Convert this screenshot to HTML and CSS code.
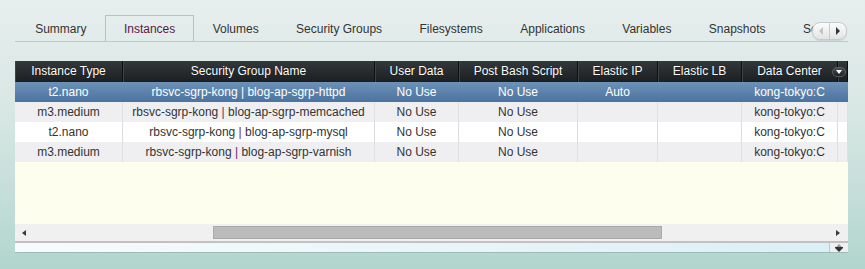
FILE: index.html
```html
<!DOCTYPE html>
<html lang="en">
<head>
  <meta charset="UTF-8" />
  <title>Instances</title>
  <link rel="stylesheet" href="styles.css">
</head>
<body>

  <div class="tabs">
    <div class="tab">Summary</div>
    <div class="tab active">Instances</div>
    <div class="tab">Volumes</div>
    <div class="tab">Security Groups</div>
    <div class="tab">Filesystems</div>
    <div class="tab">Applications</div>
    <div class="tab">Variables</div>
    <div class="tab">Snapshots</div>
    <div class="tab">Scripts</div>
    <div class="tab-scroll">
      <span class="arrow-left"></span>
      <span class="arrow-right"></span>
    </div>
  </div>

  <div class="panel">
    <div class="grid">
      <div class="row head">
        <div class="cell">Instance Type</div>
        <div class="cell">Security Group Name</div>
        <div class="cell">User Data</div>
        <div class="cell">Post Bash Script</div>
        <div class="cell">Elastic IP</div>
        <div class="cell">Elastic LB</div>
        <div class="cell">Data Center</div>
        <div class="cell"></div>
        <span class="col-menu"></span>
      </div>

      <div class="row selected">
        <div class="cell">t2.nano</div>
        <div class="cell">rbsvc-sgrp-kong <span class="sep">|</span> blog-ap-sgrp-httpd</div>
        <div class="cell">No Use</div>
        <div class="cell">No Use</div>
        <div class="cell">Auto</div>
        <div class="cell"></div>
        <div class="cell">kong-tokyo:C</div>
        <div class="cell"></div>
      </div>
      <div class="row alt">
        <div class="cell">m3.medium</div>
        <div class="cell">rbsvc-sgrp-kong <span class="sep">|</span> blog-ap-sgrp-memcached</div>
        <div class="cell">No Use</div>
        <div class="cell">No Use</div>
        <div class="cell"></div>
        <div class="cell"></div>
        <div class="cell">kong-tokyo:C</div>
        <div class="cell"></div>
      </div>
      <div class="row">
        <div class="cell">t2.nano</div>
        <div class="cell">rbsvc-sgrp-kong <span class="sep">|</span> blog-ap-sgrp-mysql</div>
        <div class="cell">No Use</div>
        <div class="cell">No Use</div>
        <div class="cell"></div>
        <div class="cell"></div>
        <div class="cell">kong-tokyo:C</div>
        <div class="cell"></div>
      </div>
      <div class="row alt">
        <div class="cell">m3.medium</div>
        <div class="cell">rbsvc-sgrp-kong <span class="sep">|</span> blog-ap-sgrp-varnish</div>
        <div class="cell">No Use</div>
        <div class="cell">No Use</div>
        <div class="cell"></div>
        <div class="cell"></div>
        <div class="cell">kong-tokyo:C</div>
        <div class="cell"></div>
      </div>
      <div class="empty"></div>
    </div>

    <!-- horizontal scrollbar -->
    <div class="hscroll">
      <span class="sb-left"></span>
      <div class="track"><div class="thumb"></div></div>
      <span class="sb-right"></span>
    </div>

    <div class="footer">
      <div class="footer-fill"></div>
      <div class="spinner">
        <span class="up"></span>
        <span class="down"></span>
      </div>
    </div>
  </div>

</body>
</html>
```

FILE: styles.css
```css
body {
  margin: 0;
  height: 269px;
  overflow: hidden;
  font-family: 'Liberation Sans', Arial, sans-serif;
  font-size: 12px;
  color: #333;
  background: linear-gradient(to bottom, #e7eeee 0%, #d6e6e3 45%, #b2d5cd 100%);
}

/* tabs */
.tabs {
  position: relative;
  display: flex;
  margin: 15px 17px 0 15px;
  padding-left: 1.5px;
  height: 26px;
  border-bottom: 1px solid #c3c7c7;
  overflow: hidden;
}

.tab {
  flex: none;
  padding: 1px 17.7px 0;
  line-height: 25px;
  border: 1px solid transparent;
  border-bottom: none;
  color: #333;
  white-space: nowrap;
}

.tab.active {
  border-color: #bcc0c0;
  color: #5a1847;
}

.tab-scroll {
  position: absolute;
  top: 7px;
  right: 1px;
  width: 33px;
  height: 16px;
  display: flex;
  border: 1px solid #c6c9c9;
  border-radius: 8px;
  background: linear-gradient(#fbfbfb, #e3e5e5);
  box-shadow: 0 1px 1px rgba(0,0,0,0.1);
}

.tab-scroll span {
  flex: 1;
  position: relative;
}

.arrow-left {
  border-right: 1px solid #c9cccc;
}

.arrow-left::after,
.arrow-right::after {
  content: '';
  position: absolute;
  top: 4px;
  width: 0;
  height: 0;
  border-top: 4px solid transparent;
  border-bottom: 4px solid transparent;
}

.arrow-left::after {
  left: 6px;
  border-right: 4px solid #c2c4c4;
}

.arrow-right::after {
  left: 6px;
  border-left: 4px solid #333;
}

/* grid panel */
.panel {
  margin: 19px 17px 0 15px;
  width: 833px;
  box-shadow: 0 1px 0 #9dbcb5;
}

.grid {
  height: 163px;
  background: #fefeee;
  overflow: hidden;
}

.row {
  display: grid;
  grid-template-columns: 108px 252px 84px 119px 80px 84px 96px 10px;
  height: 20px;
  background: #fff;
}

.cell {
  line-height: 20px;
  text-align: center;
  white-space: nowrap;
  overflow: hidden;
  border-right: 1px solid #dcdcdc;
}

.row.alt {
  background: #efeff1;
}

.row.alt .cell {
  border-right-color: #e0e0e2;
}

.row .sep {
  color: #6e2a5c;
}

.row.head {
  position: relative;
  height: 21px;
  background: linear-gradient(#34383a, #1c1f21);
}

.row.head .cell {
  line-height: 21px;
  color: #fff;
  text-shadow: 0 0 1px rgba(0,0,0,0.8);
  border-right: 1px solid #0d0f10;
  box-shadow: inset 1px 0 0 #3e4244;
}

.col-menu {
  position: absolute;
  top: 6px;
  right: 2px;
  width: 12px;
  height: 8px;
  border-radius: 5px;
  background: linear-gradient(#4a4e50, #1f2224);
  border: 1px solid #5a5e60;
}

.col-menu::after {
  content: '';
  position: absolute;
  top: 2px;
  left: 3px;
  border-left: 3px solid transparent;
  border-right: 3px solid transparent;
  border-top: 4px solid #fff;
}

.row.selected {
  background: linear-gradient(#6d92b8, #4b739f);
}

.row.selected .cell {
  color: #fff;
  border-right-color: transparent;
}

.row.selected .sep {
  color: #fff;
}

.empty {
  height: 62px;
}

/* scrollbar */
.hscroll {
  display: flex;
  align-items: center;
  height: 17px;
  background: #f0f0f0;
  border-bottom: 2px solid #c1c1c1;
}

.sb-left,
.sb-right {
  flex: none;
  width: 0;
  height: 0;
  border-top: 3.5px solid transparent;
  border-bottom: 3.5px solid transparent;
}

.sb-left {
  margin-left: 7px;
  border-right: 4px solid #3a3a3a;
}

.sb-right {
  margin-right: 8px;
  border-left: 4px solid #3a3a3a;
}

.track {
  flex: 1;
  height: 13px;
  padding-left: 187px;
  padding-right: 174px;
}

.thumb {
  height: 11px;
  background: #bbb;
  border: 1px solid #a9a9a9;
}

.footer {
  display: flex;
  height: 9px;
}

.footer-fill {
  flex: 1;
  background: linear-gradient(to right, #f8fbfd, #dbeff6);
  border-right: 1px solid #a9d0dd;
}

.spinner {
  width: 18px;
  background: #f0f0f0;
  display: flex;
  flex-direction: column;
  align-items: center;
  justify-content: center;
}

.spinner .up {
  width: 0;
  height: 0;
  border-left: 4px solid transparent;
  border-right: 4px solid transparent;
  border-bottom: 4px solid #999;
}

.spinner .down {
  width: 0;
  height: 0;
  border-left: 4px solid transparent;
  border-right: 4px solid transparent;
  border-top: 4px solid #333;
  border-bottom: 0;
  box-shadow: 0 -1px 0 #333;
}
```
